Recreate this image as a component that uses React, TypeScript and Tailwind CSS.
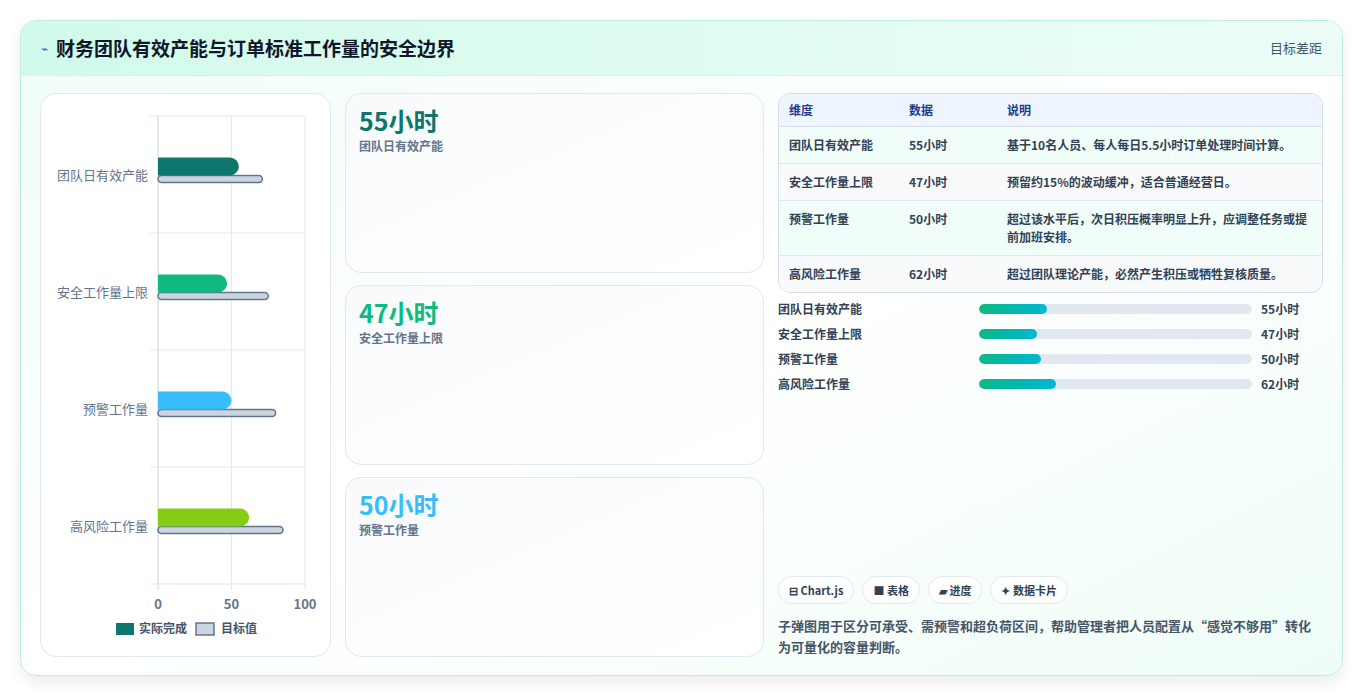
const font = { fontFamily: '"Noto Sans CJK SC", "Noto Sans", sans-serif' };

const rows = [
  { name: "团队日有效产能", value: "55小时", note: "基于10名人员、每人每日5.5小时订单处理时间计算。", actual: 55, target: 71, color: "#0f766e", fill: 68 },
  { name: "安全工作量上限", value: "47小时", note: "预留约15%的波动缓冲，适合普通经营日。", actual: 47, target: 75, color: "#10b981", fill: 58 },
  { name: "预警工作量", value: "50小时", note: "超过该水平后，次日积压概率明显上升，应调整任务或提前加班安排。", actual: 50, target: 80, color: "#38bdf8", fill: 62 },
  { name: "高风险工作量", value: "62小时", note: "超过团队理论产能，必然产生积压或牺牲复核质量。", actual: 62, target: 85, color: "#84cc16", fill: 77 },
];

const Chart = () => {
  const x0 = 117, w = 147, top = 22, rowH = 117;
  return (
    <svg width="290" height="562" className="block">
      {[0, 1, 2, 3, 4].map((i) => (
        <line key={i} x1={x0 - 8} x2={x0 + w} y1={top + i * rowH} y2={top + i * rowH} stroke="#e5e7eb" />
      ))}
      {[0, 50, 100].map((v) => (
        <g key={v}>
          <line x1={x0 + (v / 100) * w} x2={x0 + (v / 100) * w} y1={top} y2={top + 4 * rowH + 6} stroke={v === 0 ? "#cbd5e1" : "#e5e7eb"} />
          <text x={x0 + (v / 100) * w} y={top + 4 * rowH + 25} textAnchor="middle" fontSize="13" fontWeight="600" fill="#64748b">{v}</text>
        </g>
      ))}
      {rows.map((r, i) => {
        const cy = top + i * rowH + rowH / 2;
        return (
          <g key={r.name}>
            <text x={x0 - 10} y={cy + 5} textAnchor="end" fontSize="13" fill="#64748b">{r.name}</text>
            <rect x={x0} y={cy + 1} width={(r.target / 100) * w} height={7} rx={3.5} fill="#cbd5e1" stroke="#64748b" strokeWidth="1.5" />
            <path d={`M${x0} ${cy - 17} h${(r.actual / 100) * w - 9} a9 9 0 0 1 0 18 h-${(r.actual / 100) * w - 9} z`} fill={r.color} />
          </g>
        );
      })}
      <rect x="75" y="529" width="18" height="12" fill="#0f766e" />
      <text x="98" y="539" fontSize="12" fill="#475569" fontWeight="600">实际完成</text>
      <rect x="155" y="529" width="18" height="12" fill="#cbd5e1" stroke="#64748b" strokeWidth="1.5" />
      <text x="180" y="539" fontSize="12" fill="#475569" fontWeight="600">目标值</text>
    </svg>
  );
};

export default function App() {
  return (
    <div style={font} className="w-[1363px] h-[696px] bg-white pt-5 px-5">
      <div className="h-[656px] rounded-2xl border border-[#bdeedd] bg-gradient-to-br from-[#f0fdf8] via-white to-[#effdf7] shadow-[0_6px_16px_rgba(0,0,0,0.08)] overflow-hidden flex flex-col">
        <div className="h-[55px] shrink-0 flex items-center justify-between px-5 bg-gradient-to-r from-[#d1faea] to-[#ecfdf7] border-b border-[#d7f3ea]">
          <div className="flex items-center gap-2">
            <span className="text-[#2563eb] text-xs">⌁</span>
            <h1 className="text-[19px] font-bold text-[#0f172a]">财务团队有效产能与订单标准工作量的安全边界</h1>
          </div>
          <span className="text-[13px] text-[#475569]">目标差距</span>
        </div>
        <div className="flex gap-[14px] px-[19px] pt-[17px] pb-[18px] flex-1">
          <div className="w-[291px] rounded-2xl border border-[#e2e8f0] bg-white">
            <Chart />
          </div>
          <div className="w-[419px] flex flex-col gap-3">
            {rows.slice(0, 3).map((r) => (
              <div key={r.name} className="flex-1 rounded-2xl border border-[#e2e8f0] bg-gradient-to-br from-[#f8fafc] to-white px-[13px] pt-2">
                <div style={{ color: r.color }} className="text-[25px] font-bold leading-[36px]">{r.value}</div>
                <div className="text-xs font-semibold text-[#64748b]">{r.name}</div>
              </div>
            ))}
          </div>
          <div className="flex-1 flex flex-col">
            <div className="rounded-xl border border-[#d5dde8] overflow-hidden text-xs">
              <div className="flex h-[33px] items-center bg-[#eef5ff] border-b border-[#d5dde8] font-semibold text-[#1e3a8a]">
                <div className="w-[130px] pl-[10px]">维度</div>
                <div className="w-[98px]">数据</div>
                <div className="flex-1">说明</div>
              </div>
              {rows.map((r, i) => (
                <div key={r.name} className={`flex py-[9px] leading-[18px] font-semibold text-[#334155] ${i % 2 ? "bg-[#f8fafc]" : "bg-[#f0fdf8]"} ${i < 3 ? "border-b border-[#e2e8f0]" : ""}`}>
                  <div className="w-[130px] pl-[10px]">{r.name}</div>
                  <div className="w-[98px]">{r.value}</div>
                  <div className="flex-1 pr-3">{r.note}</div>
                </div>
              ))}
            </div>
            <div className="mt-[8px] flex flex-col gap-[9px]">
              {rows.map((r) => (
                <div key={r.name} className="flex items-center h-4 text-xs font-semibold text-[#334155]">
                  <div className="w-[201px]">{r.name}</div>
                  <div className="w-[273px] h-[10px] rounded-full bg-[#e2e8f0] overflow-hidden">
                    <div style={{ width: r.fill }} className="h-full rounded-full bg-gradient-to-r from-[#10b981] to-[#06b6d4]" />
                  </div>
                  <div className="ml-[9px]">{r.value}</div>
                </div>
              ))}
            </div>
            <div className="mt-auto flex gap-2">
              {["⊟ Chart.js", "■ 表格", "▰ 进度", "✦ 数据卡片"].map((t) => (
                <span key={t} className="h-[28px] px-[10px] flex items-center rounded-full border border-[#e2e8f0] bg-white text-[11px] font-semibold text-[#334155]">{t}</span>
              ))}
            </div>
            <p className="mt-[11px] text-[13px] leading-[21px] font-semibold text-[#475569]">
              子弹图用于区分可承受、需预警和超负荷区间，帮助管理者把人员配置从“感觉不够用”转化为可量化的容量判断。
            </p>
          </div>
        </div>
      </div>
    </div>
  );
}
